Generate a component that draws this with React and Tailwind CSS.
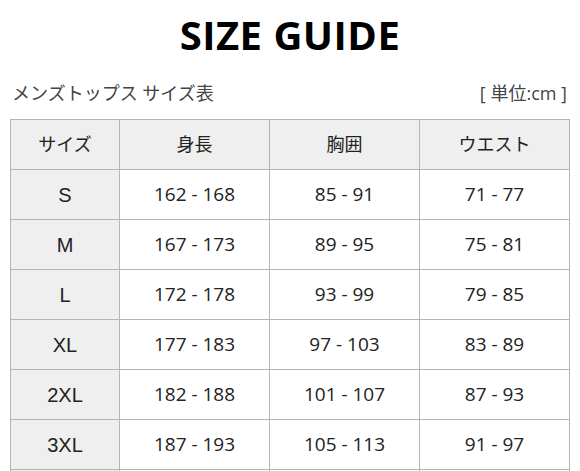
import React from 'react';

const rows = [
  ['S', '162 - 168', '85 - 91', '71 - 77'],
  ['M', '167 - 173', '89 - 95', '75 - 81'],
  ['L', '172 - 178', '93 - 99', '79 - 85'],
  ['XL', '177 - 183', '97 - 103', '83 - 89'],
  ['2XL', '182 - 188', '101 - 107', '87 - 93'],
  ['3XL', '187 - 193', '105 - 113', '91 - 97'],
];

const headers = ['サイズ', '身長', '胸囲', 'ウエスト'];

const font = { fontFamily: '"Open Sans", "Noto Sans CJK JP", sans-serif' };

export default function App() {
  return (
    <div className="bg-white w-[580px] h-[471px] overflow-hidden" style={font}>
      {/* Title */}
      <h1 className="text-center font-bold text-[40px] leading-none text-black pt-[15px] tracking-[0.5px]">
        SIZE GUIDE
      </h1>

      {/* Caption row */}
      <div className="flex justify-between items-center px-[12px] mt-[29px] text-[#444] text-[18px] leading-none">
        <span>メンズトップス サイズ表</span>
        <span className="pr-[1px]">[ 単位:cm ]</span>
      </div>

      {/* Table */}
      <table className="ml-[10px] mt-[17px] border-collapse text-[#222]">
        <thead>
          <tr className="bg-[#efefef]">
            {headers.map((h, i) => (
              <th
                key={h}
                className={`border border-[#b5b5b5] h-[50px] font-normal text-[18px] ${i === 0 ? 'w-[109px]' : 'w-[150px]'}`}
              >
                {h}
              </th>
            ))}
          </tr>
        </thead>
        <tbody>
          {rows.map((r) => (
            <tr key={r[0]}>
              <td className="border border-[#b5b5b5] h-[50px] bg-[#efefef] text-center text-[20px] font-['Liberation_Sans',sans-serif]">
                {r[0]}
              </td>
              <td className="border border-[#b5b5b5] h-[50px] text-center text-[19px]">{r[1]}</td>
              <td className="border border-[#b5b5b5] h-[50px] text-center text-[19px]">{r[2]}</td>
              <td className="border border-[#b5b5b5] h-[50px] text-center text-[19px]">{r[3]}</td>
            </tr>
          ))}
          <tr>
            <td className="border border-[#b5b5b5] h-[50px] bg-[#efefef]"></td>
            <td className="border border-[#b5b5b5] h-[50px]"></td>
            <td className="border border-[#b5b5b5] h-[50px]"></td>
            <td className="border border-[#b5b5b5] h-[50px]"></td>
          </tr>
        </tbody>
      </table>
    </div>
  );
}
